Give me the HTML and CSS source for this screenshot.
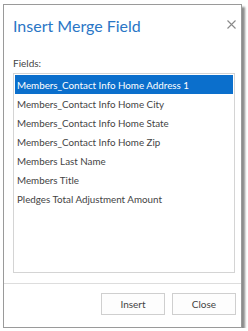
FILE: index.html
```html
<!DOCTYPE html>
<html lang="en">
<head>
    <meta charset="UTF-8">
    <title>Insert Merge Field</title>
    <link rel="stylesheet" href="styles.css">
</head>
<body>
    <div class="dialog">
        <div class="dialog-header">
            <h1>Insert Merge Field</h1>
            <span class="close-x">
                <svg width="9" height="9" viewBox="0 0 9 9"><path d="M0.5 0.5 L8.5 8.5 M8.5 0.5 L0.5 8.5" stroke="#8a8a8a" stroke-width="1.1" fill="none"/></svg>
            </span>
        </div>
        <div class="dialog-body">
            <label class="field-label">Fields:</label>
            <ul class="field-list">
                <li class="selected">Members_Contact Info Home Address 1</li>
                <li>Members_Contact Info Home City</li>
                <li>Members_Contact Info Home State</li>
                <li>Members_Contact Info Home Zip</li>
                <li>Members Last Name</li>
                <li>Members Title</li>
                <li>Pledges Total Adjustment Amount</li>
            </ul>
        </div>
        <div class="dialog-footer">
            <button type="button">Insert</button>
            <button type="button">Close</button>
        </div>
    </div>
</body>
</html>
```

FILE: styles.css
```css
body {
    margin: 0;
    background: #ffffff;
    font-family: Lato, "Open Sans", sans-serif;
    color: #444444;
}

.dialog {
    box-sizing: border-box;
    width: 239px;
    height: 324px;
    margin: 4px 0 0 3px;
    background: #ffffff;
    border: 1px solid #9a9a9a;
    box-shadow: 3px 3px 2px rgba(0, 0, 0, 0.45);
    display: flex;
    flex-direction: column;
}

.dialog-header {
    display: flex;
    justify-content: space-between;
    align-items: flex-start;
    padding: 10px 5px 0 9px;
}

.dialog-header h1 {
    margin: 0;
    font-size: 16px;
    font-weight: 400;
    line-height: 22px;
    color: #2a76c6;
}

.close-x {
    display: flex;
    margin-top: 5px;
}

.dialog-body {
    padding: 0 6px 0 9px;
    flex: 1;
}

.field-label {
    display: block;
    font-size: 10px;
    line-height: 14px;
    margin: 19px 0 3px 0;
    color: #444444;
}

.field-list {
    list-style: none;
    margin: 0;
    padding: 1px;
    box-sizing: border-box;
    height: 200px;
    border: 1px solid #d4d4d4;
}

.field-list li {
    height: 19px;
    line-height: 20px;
    padding-left: 2px;
    font-size: 9.8px;
    color: #444444;
    white-space: nowrap;
}

.field-list li.selected {
    background: #0b6fcc;
    color: #ffffff;
}

.dialog-footer {
    border-top: 1px solid #dddddd;
    padding: 9px 5px 12px 0;
    display: flex;
    justify-content: flex-end;
    gap: 7px;
}

.dialog-footer button {
    width: 64px;
    height: 22px;
    font-family: Lato, "Open Sans", sans-serif;
    font-size: 10px;
    color: #444444;
    background: #fdfdfd;
    border: 1px solid #cfcfcf;
    padding: 0;
}
```
